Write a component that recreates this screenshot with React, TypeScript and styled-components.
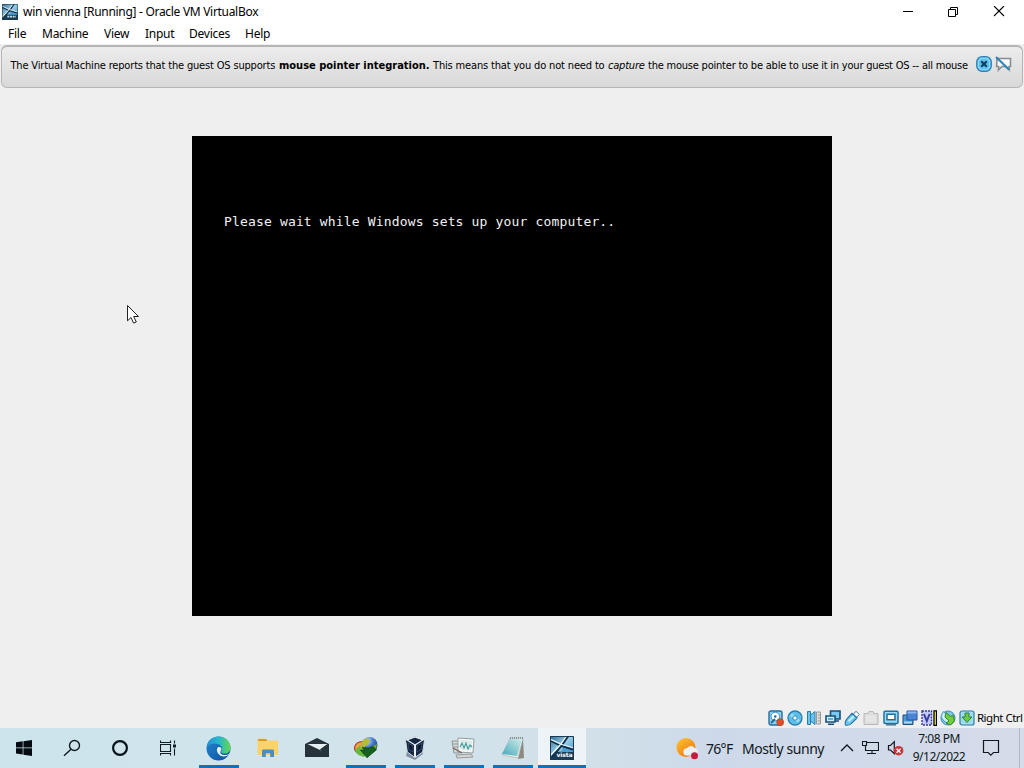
import React, { FC } from 'react'
import styled, { createGlobalStyle } from 'styled-components'

const App: FC = () => {
  return (
    <Desktop>
      <GlobalStyle />
      <TitleBar>
        <VistaIcon size={16} />
        <Title>win vienna [Running] - Oracle VM VirtualBox</Title>
        <WindowControls />
      </TitleBar>
      <MenuBar>
        {menus.map((menu) => (
          <MenuItem key={menu.label} $width={menu.width}>
            {menu.label}
          </MenuItem>
        ))}
      </MenuBar>
      <Notice>
        <NoticeText>
          <Part $width={268.5} $spacing={-0.17}>The Virtual Machine reports that the guest OS supports</Part>
          <Part as="b" $width={154} $spacing={0}>mouse pointer integration.</Part>
          <Part $width={175} $spacing={-0.16}>This means that you do not need to</Part>
          <Part as="i" $width={40} $spacing={-0.2}>capture</Part>
          <Part $width={321} $spacing={-0.215}>the mouse pointer to be able to use it in your guest OS -- all mouse</Part>
        </NoticeText>
        <NoticeIcons />
      </Notice>
      <Workspace>
        <GuestScreen>
          <GuestText>Please wait while Windows sets up your computer..</GuestText>
        </GuestScreen>
        <Pointer width="14" height="22" viewBox="0 0 14 22">
          <path d="M1.5 1.5v15.3l3.5-3.3 2.6 5.6 2.7-1.1-2.6-5.5h4.8z" fill="#fff" stroke="#222" />
        </Pointer>
      </Workspace>
      <StatusBar>
        <StatusIcons />
        <HostKey>Right Ctrl</HostKey>
      </StatusBar>
      <Taskbar>
        <SystemButtons>
          <SystemButton>
            <svg width="16" height="16" viewBox="0 0 16 16">
              <path d="M0 2.2 6.7 1.3V7.5H0zM7.4 1.2 16 0v7.5H7.4zM0 8.2h6.7v6.3L0 13.6zM7.4 8.2H16V16l-8.6-1.3z" fill="#050b10" />
            </svg>
          </SystemButton>
          <SystemButton>
            <svg width="18" height="18" viewBox="0 0 18 18" fill="none" stroke="#111b22" strokeWidth="1.4">
              <circle cx="11.5" cy="6.5" r="5" />
              <path d="m8 10.2-7 6.6" />
            </svg>
          </SystemButton>
          <SystemButton>
            <svg width="18" height="18" viewBox="0 0 18 18">
              <circle cx="9" cy="9" r="6.9" fill="none" stroke="#07131b" strokeWidth="2.2" />
            </svg>
          </SystemButton>
          <SystemButton>
            <svg width="16" height="16" viewBox="0 0 16 16" fill="none" stroke="#111b22" strokeWidth="1.1">
              <path d="M.5.5v2h10v-2M.5 15.5v-2h10v2M.5 4.5h10v7H.5zM14.5.5v3M14.5 8.5v7" />
              <path d="M13 4.5h3v3h-3z" fill="#111b22" stroke="none" />
            </svg>
          </SystemButton>
        </SystemButtons>
        {apps.map((app) => (
          <AppButton key={app.name} $active={app.active}>
            <AppIcon>{app.icon}</AppIcon>
            <RunningMark $running={app.running} $active={app.active} />
          </AppButton>
        ))}
        <Weather>
          <WeatherIcon />
          <Temperature>76°F</Temperature>
          <Sky>Mostly sunny</Sky>
        </Weather>
        <Tray />
        <Clock>
          <ClockLine>7:08 PM</ClockLine>
          <ClockLine>9/12/2022</ClockLine>
        </Clock>
        <ActionCenter>
          <svg width="18" height="18" viewBox="0 0 18 18" fill="none" stroke="#101820" strokeWidth="1.2">
            <path d="M1.5 1.5h15v12h-5L8.8 16.2 6.2 13.5H1.5z" />
          </svg>
        </ActionCenter>
        <ShowDesktop />
      </Taskbar>
    </Desktop>
  )
}

const VistaIcon: FC<{ size: number }> = ({ size }) => (
  <svg width={size} height={size} viewBox="0 0 24 24">
    <defs>
      <linearGradient id={`vista${size}`} x1="0" y1="0" x2="1" y2="1">
        <stop offset="0" stopColor="#2a668f" />
        <stop offset=".45" stopColor="#9bd0ea" />
        <stop offset="1" stopColor="#2e77aa" />
      </linearGradient>
    </defs>
    <path d="M0 0h24v24H0z" fill={`url(#vista${size})`} />
    <path d="M0 21 5 16l19-1v9H0z" fill="#183b56" />
    <path d="m14 9 10 4v3H11z" fill="#4b9fd0" />
    <path d="M0 4.5 11 9.8 24 13.8M18.3 0 11.5 10 2 21" fill="none" stroke="#123049" strokeWidth="2" />
    <path d="M0 3 11 8.3 24 12M16.5 0 10 9 0 20" fill="none" stroke="#eff9fd" strokeWidth="1.2" />
    {size > 16 && (
      <text x="6.5" y="20.5" fill="#fff" fontFamily="DejaVu Sans" fontSize="6" fontWeight="bold" textLength="16">vista</text>
    )}
    {size <= 16 && <path d="M8 19h13" stroke="#c7dce9" strokeWidth="2.5" strokeDasharray="3 1" />}
    <path d="M.5.5h23v23H.5z" fill="none" stroke="#193b55" />
  </svg>
)

const WindowControls: FC = () => (
  <Controls>
    <svg width="12" height="12" viewBox="0 0 12 12" stroke="#000">
      <path d="M1 5.5h10" />
    </svg>
    <svg width="12" height="12" viewBox="0 0 12 12" fill="none" stroke="#000">
      <path d="M.5 3.5h7v7h-7zM2.5 3V1.5h7v7H8" />
    </svg>
    <svg width="12" height="12" viewBox="0 0 12 12" stroke="#000" strokeWidth="1.1">
      <path d="m1 0 10 10M11 0 1 10" />
    </svg>
  </Controls>
)

const NoticeIcons: FC = () => (
  <NoticeActions>
    <svg width="16" height="16" viewBox="0 0 16 16">
      <rect x=".7" y=".7" width="14.6" height="14.6" rx="5.5" fill="#5dc2f5" stroke="#2f7fb5" strokeWidth="1.3" />
      <rect x="2.3" y="2.3" width="11.4" height="11.4" rx="4" fill="none" stroke="#9bdcfb" />
      <path d="m5.2 5.2 5.6 5.6m0-5.6-5.6 5.6" stroke="#0d405f" strokeWidth="2.2" />
    </svg>
    <svg width="17" height="16" viewBox="0 0 17 16">
      <path d="M2 2.5h13.5v8H14l.3 3.5-3.6-3.5H6.8L3.4 14l.2-3.5h-2z" fill="#f8fafb" stroke="#858d91" strokeWidth="1.6" />
      <path d="m1 1 13 12.5" stroke="#2a83b8" strokeWidth="2" />
    </svg>
  </NoticeActions>
)

// Device indicators of the machine, left to right
const StatusIcons: FC = () => (
  <Indicators>
    <Indicator>
      <rect x="1" y="1" width="13" height="14" rx="2" fill="#8fd2ef" stroke="#236e9e" strokeWidth="1.4" />
      <circle cx="7.3" cy="6.5" r="4.3" fill="#fff" stroke="#3b8fc2" />
      <circle cx="7.3" cy="6.5" r="1.2" fill="#1c6596" />
      <path d="m3 13 4-4" stroke="#1c6596" strokeWidth="1.8" />
      <circle cx="12.2" cy="12.2" r="3.5" fill="#e04e27" stroke="#a83f2d" strokeWidth=".6" />
    </Indicator>
    <Indicator>
      <circle cx="8" cy="8" r="7" fill="#5dbfe8" stroke="#277eb0" strokeWidth="1.3" />
      <path d="M4 4.5 8 8l4 3.5" stroke="#9bdcf3" strokeWidth="3" />
      <circle cx="8" cy="8" r="2.2" fill="#fff" stroke="#2382b5" />
    </Indicator>
    <Indicator>
      <path d="M1.5 1.5h3v13h-3zM4.5 5 9 1.5v13L4.5 11z" fill="#69c4ec" stroke="#287eae" />
      <path d="M10.5 2h4v12h-4zM12 5h3M12 8h3M12 11h3" fill="#ddd" stroke="#999" />
    </Indicator>
    <Indicator>
      <path d="M5.5 1h9.5v8H5.5zM9 11h5" fill="#79c9ec" stroke="#174f78" strokeWidth="1.6" />
      <path d="M1 6h9v6H1zM3 14.2h6" fill="#d1effa" stroke="#174f78" strokeWidth="1.6" />
      <path d="M3 8h5v2H3z" fill="#55b1df" />
    </Indicator>
    <Indicator>
      <path d="m9.5 4.2 2.5-3 3.3 3.3-2.8 2.8z" fill="#fff" stroke="#587888" />
      <path d="M8 3.3 13 8l-5.7 5.6c-2 1.6-4.5 1.8-5.8 1.4-.5-1.8 0-4.2 1.3-5.8z" fill="#70c8ee" stroke="#2478a7" strokeWidth="1.2" />
      <path d="m4.5 11.3 5.3-5" stroke="#c4effb" strokeWidth="2" />
    </Indicator>
    <Indicator>
      <path d="M1 3.5h4l1-2h4l1 2h4v11H1z" fill="#ddd" stroke="#b8b8b8" />
      <path d="M3 5.5h10v7H3z" fill="#e5e5e5" />
    </Indicator>
    <Indicator>
      <rect x="1" y="1.2" width="14" height="12.3" rx="1" fill="#9adcf5" stroke="#246f9e" strokeWidth="1.5" />
      <path d="M4 4.3h8v5.4H4z" fill="#fff" stroke="#216e9b" strokeWidth="1.5" />
      <path d="M3 14.8h10" stroke="#557b91" strokeWidth="1.6" />
    </Indicator>
    <Indicator>
      <path d="M1 5h10v9.5H1z" fill="#4b9bd0" stroke="#204c7c" />
      <path d="M5 1h10v9H5z" fill="#4a83d4" stroke="#2754a0" />
      <path d="M5.5 2.5h9" stroke="#8ab8f5" strokeWidth="2" />
      <path d="M2 12.5h8" stroke="#a7d9ef" strokeWidth="2" />
    </Indicator>
    <Indicator>
      <path d="M1 1h9.5v14H1z" fill="#c5c9fa" stroke="#343c91" strokeDasharray="2 1" strokeWidth="1.4" />
      <path d="m3 4 2.8 7 2.8-7" fill="none" stroke="#393e9c" strokeWidth="2" />
      <path d="M13 .8h2.5v14.5H13z" fill="#eef45a" stroke="#000" strokeWidth="1.3" />
    </Indicator>
    <Indicator>
      <circle cx="8" cy="8" r="7" fill="#79c9eb" stroke="#388bb2" />
      <path d="M3 1.5 9 6v8L4 11 1 7z" fill="#cceef8" stroke="#378db5" strokeWidth=".8" />
      <path d="m6 2.5 4.5 4L13 5l1.5 6-4 4L6 13l3-2-4-4z" fill="#70cf3b" stroke="#39822b" />
    </Indicator>
    <Indicator>
      <rect x="1" y="1" width="14" height="14" rx="2" fill="#a0dced" stroke="#2c7eaa" strokeWidth="1.2" />
      <path d="M6 3h4v4h3l-5 5.5L3 7h3z" fill="#69cb45" stroke="#2d8244" />
    </Indicator>
  </Indicators>
)

const WeatherIcon: FC = () => (
  <svg width="24" height="24" viewBox="0 0 24 24">
    <defs>
      <linearGradient id="sun" x1="0" y1="0" x2=".7" y2="1">
        <stop offset="0" stopColor="#ffc52c" />
        <stop offset="1" stopColor="#ed7915" />
      </linearGradient>
    </defs>
    <circle cx="10" cy="11.5" r="9.5" fill="url(#sun)" />
    <path d="M11 19.5a3.6 3.6 0 0 1 0-7.2 4.4 4.4 0 0 1 7.4-.3c4.4.4 4.7 7.5-.3 7.5z" fill="#eaf0fa" />
    <circle cx="18.5" cy="19.7" r="3.5" fill="#c51d3c" />
  </svg>
)

const Tray: FC = () => (
  <TrayIcons>
    <svg width="14" height="10" viewBox="0 0 14 10" fill="none" stroke="#101820" strokeWidth="1.4">
      <path d="m1 8 6-6 6 6" />
    </svg>
    <svg width="17" height="16" viewBox="0 0 17 16" fill="none" stroke="#101820" strokeWidth="1.1">
      <path d="M5 2.5h11.5v8H3.5V6M10 10.5v3M5 13.5h9M.5 1.5h4v4h-4z" />
    </svg>
    <svg width="18" height="16" viewBox="0 0 18 16">
      <path d="M1.5 5.5h2l3.8-3.8v12L3.5 10h-2z" fill="none" stroke="#101820" strokeWidth="1.2" />
      <circle cx="11.6" cy="10.7" r="4.8" fill="#cc3438" />
      <path d="m9.6 8.7 4 4m0-4-4 4" stroke="#fff" strokeWidth="1.3" />
    </svg>
  </TrayIcons>
)

const menus = [
  { label: 'File', width: 34 },
  { label: 'Machine', width: 62 },
  { label: 'View', width: 41 },
  { label: 'Input', width: 44 },
  { label: 'Devices', width: 56 },
  { label: 'Help', width: 40 },
]

const apps = [
  {
    name: 'Edge',
    running: true,
    icon: (
      <svg width="25" height="25" viewBox="0 0 24 24">
        <defs>
          <linearGradient id="edgeTop" x1="0" x2="1">
            <stop offset="0" stopColor="#238fd3" />
            <stop offset=".5" stopColor="#25b8ce" />
            <stop offset="1" stopColor="#67d54b" />
          </linearGradient>
          <linearGradient id="edgeBottom" x1="0" y1="0" x2="1" y2="1">
            <stop offset="0" stopColor="#2487d4" />
            <stop offset="1" stopColor="#0d509b" />
          </linearGradient>
        </defs>
        <circle cx="12" cy="12" r="11.5" fill="url(#edgeBottom)" />
        <path d="M.6 11C1.5 3.5 7.3.4 12.4.5c6.3.1 11.2 5.3 11.1 10.7 0 4.1-3.4 6.2-6.8 5.5-3-.6-2.3-1.7-1.5-3.3C16.7 9.8 12.4 7 8.4 7.1 4.4 7.2 1.5 9.2.6 11z" fill="url(#edgeTop)" />
        <path d="M11.8 10.6c3-.2 3.7 1.9 2.5 3.4-1.7 2.8.8 4.8 5 4.2 1.3-.2 2-.6 3.5-1.4-2.6 3.5-8 3.9-10.4.8-2.1-2.2-2.7-5.3-.6-7z" fill="#e3f1f7" />
        <path d="M22.8 16.8h1.2V20h-3z" fill="#d2e4eb" />
      </svg>
    ),
  },
  {
    name: 'Explorer',
    icon: (
      <svg width="24" height="24" viewBox="0 0 24 24">
        <path d="M1.5 4c0-1 .5-1.5 1.4-1.5h6l2 2h9.6c1 0 1.5.5 1.5 1.5v13H1.5z" fill="#fdd269" />
        <path d="M2 3h8l1.5 2H2z" fill="#d99c28" />
        <path d="M6 21v-6.5l1-1h10l1 1V21h-3.8v-3.8H9.8V21z" fill="#4c8db9" />
      </svg>
    ),
  },
  {
    name: 'Mail',
    icon: (
      <svg width="26" height="22" viewBox="0 0 26 22">
        <path d="M1 7 13 1l12 6v13H1z" fill="#27333b" />
        <path d="M3.5 7h20l-7.2 5.5L18 14z" fill="#e4eef3" />
        <path d="m15.7 12.8 7.5-5.6-3.2 7.6z" fill="#27333b" />
      </svg>
    ),
  },
  {
    name: 'Download Manager',
    running: true,
    icon: (
      <svg width="26" height="26" viewBox="0 0 26 26">
        <defs>
          <radialGradient id="globe" cx=".35" cy=".25" r=".8">
            <stop offset="0" stopColor="#c7e8ff" />
            <stop offset=".45" stopColor="#4f7fd0" />
            <stop offset="1" stopColor="#123c76" />
          </radialGradient>
        </defs>
        <ellipse cx="9.5" cy="13" rx="8" ry="6.5" fill="#eda23b" stroke="#ae392a" strokeWidth="1.2" />
        <path d="M2 15c3-2 4-5 9-5l5 6-5 6c-4-1-8-3-9-7z" fill="#68b741" />
        <circle cx="16.5" cy="10" r="8" fill="url(#globe)" />
        <path d="m10 5 4-2 3 2-2 5-3 1-1 4-4-2z" fill="#b5bd37" />
        <path d="m18 12 6-3-1 5-4 4z" fill="#79a63a" />
        <path d="M9 12c4 1.5 7 1.5 10.5-.8l4 3.5L14 22.8 7.5 15l4 .5z" fill="#15611d" stroke="#0a3f11" strokeWidth=".7" />
      </svg>
    ),
  },
  {
    name: 'VirtualBox',
    running: true,
    icon: (
      <svg width="24" height="26" viewBox="0 0 24 26">
        <path d="m4 16-1 5 9 4 8-6-1-3z" fill="#8390a4" />
        <path d="m2.5 5 9.5-4 9.5 4-1.8 12L12 22.5 4.3 17z" fill="#142743" stroke="#d5dce6" />
        <path d="m4 5 8-3 8 3-8 5z" fill="#142743" stroke="#edf2f7" strokeWidth="1.2" />
        <path d="M12 10v12" stroke="#eaf0f5" strokeWidth="2" />
        <path d="m5 8 5 3v6l-4-3zM14 11l5-3-1 6-4 3z" fill="#071832" stroke="#52657e" strokeWidth=".6" />
      </svg>
    ),
  },
  {
    name: 'System Monitor',
    running: true,
    icon: (
      <svg width="25" height="22" viewBox="0 0 25 22">
        <path d="M1 4h8v12H3z" fill="#d4d8d9" stroke="#8d9798" />
        <path d="M2 7h6M2 10h6" stroke="#999" />
        <path d="m7 1 16 1-1 14-15-1z" fill="#f1f5f5" stroke="#989d9d" />
        <path d="m9 3 12 1-1 9-11-1z" fill="#dce9e9" />
        <path d="m9 10 2-4 2 5 2-5 2 6 2-4 2 2" fill="none" stroke="#439d9e" strokeWidth="1.1" />
        <path d="m5 18 15-1 2 3-16 1z" fill="#d6d6d6" stroke="#999" />
        <path d="m2 11 9 5" stroke="#765f55" strokeWidth="1.2" />
      </svg>
    ),
  },
  {
    name: 'Notepad',
    running: true,
    icon: (
      <svg width="26" height="24" viewBox="0 0 26 24">
        <defs>
          <linearGradient id="note" x1="1" y1="0" x2="0" y2="1">
            <stop offset="0" stopColor="#d4eceb" />
            <stop offset="1" stopColor="#3ea8b8" />
          </linearGradient>
        </defs>
        <path d="m23 2 1 20-6 1z" fill="#8c8b82" />
        <path d="M10 2h13l-5 20-16-3z" fill="#e9eded" stroke="#a2a9a8" strokeWidth=".6" />
        <path d="M10 3h12l-5 17-15-2z" fill="url(#note)" />
        <path d="M10 2h13" stroke="#777f80" strokeDasharray="1 1" strokeWidth="1.6" />
      </svg>
    ),
  },
  { name: 'Virtual Machine', running: true, active: true, icon: <VistaIcon size={24} /> },
]

export default App

const GlobalStyle = createGlobalStyle`
  body {
    margin: 0;
    overflow: hidden;
  }
  svg {
    display: block;
    flex: none;
  }
`

const Desktop = styled.div`
  display: flex;
  flex-direction: column;
  width: 1024px;
  height: 768px;
  background: #efefef;
  color: #000;
  font-family: 'Noto Sans', 'Open Sans', sans-serif;
  font-size: 12px;
  white-space: nowrap;
`

const TitleBar = styled.header`
  display: flex;
  align-items: center;
  height: 24px;
  padding-left: 2px;
  box-sizing: border-box;
  background: #fff;
`

const Title = styled.div`
  margin-left: 5px;
  line-height: 24px;
  letter-spacing: -0.3px;
`

const Controls = styled.div`
  display: flex;
  gap: 33.5px;
  margin: -1px 19px 0 auto;
`

const MenuBar = styled.nav`
  display: flex;
  height: 20px;
  padding-left: 8px;
  background: #fff;
  line-height: 20px;
`

const MenuItem = styled.div<{ $width: number }>`
  width: ${({ $width }) => $width}px;
  letter-spacing: -0.25px;
`

const Notice = styled.section`
  display: flex;
  height: 43px;
  margin: 1px 1px 0;
  padding: 0 10px 0 8.5px;
  box-sizing: border-box;
  border: 1px solid #b5b5b5;
  border-top-width: 2px;
  border-radius: 6px;
  background: linear-gradient(#ececec, #d9d9d9);
`

const NoticeText = styled.p`
  display: flex;
  margin: 0;
  font-family: 'DejaVu Sans Condensed', 'DejaVu Sans', sans-serif;
  font-stretch: condensed;
  font-size: 11px;
  line-height: 37px;
`

const Part = styled.span<{ $width: number; $spacing: number }>`
  width: ${({ $width }) => $width}px;
  letter-spacing: ${({ $spacing }) => $spacing}px;
`

const NoticeActions = styled.div`
  display: flex;
  gap: 3px;
  margin: 9px 0 0 auto;
`

const Workspace = styled.main`
  position: relative;
  display: flex;
  justify-content: center;
  flex: 1;
  padding-top: 48px;
`

const GuestScreen = styled.div`
  width: 640px;
  height: 480px;
  padding: 78px 32px 0;
  box-sizing: border-box;
  background: #000;
`

const GuestText = styled.div`
  color: #f2f2f2;
  font-family: 'DejaVu Sans Mono', monospace;
  font-size: 13px;
  line-height: 16px;
  letter-spacing: 0.16px;
`

const Pointer = styled.svg`
  position: absolute;
  top: 216px;
  left: 126px;
`

const StatusBar = styled.footer`
  display: flex;
  align-items: center;
  height: 20px;
  padding-left: 768px;
`

const Indicators = styled.div`
  display: flex;
  gap: 3.1px;
`

const Indicator = styled.svg.attrs({ width: 16, height: 16, viewBox: '0 0 16 16', fill: 'none' })``

const HostKey = styled.div`
  margin: -2px 0 0 2px;
  font-size: 11.5px;
  letter-spacing: -0.5px;
`

const Taskbar = styled.div`
  display: flex;
  height: 40px;
  background: linear-gradient(90deg, #cce4ec 0, #d2e4eb 30%, #d2e0e9 58%, #cdd9ea 70%, #d5dbe9 100%);
  color: #101820;
`

const SystemButtons = styled.div`
  display: flex;
  width: 194px;
`

const SystemButton = styled.div`
  display: flex;
  align-items: center;
  justify-content: center;
  width: 48px;
`

const AppButton = styled.div<{ $active?: boolean }>`
  display: flex;
  flex-direction: column;
  align-items: center;
  flex: none;
  width: ${({ $active }) => ($active ? 48 : 49)}px;
  margin-left: ${({ $active }) => ($active ? 1 : 0)}px;
  background: ${({ $active }) => ($active ? '#edf3f7' : 'transparent')};
`

const AppIcon = styled.div`
  display: flex;
  align-items: center;
  flex: 1;
  padding-top: 3px;
`

const RunningMark = styled.div<{ $running?: boolean; $active?: boolean }>`
  width: ${({ $active }) => ($active ? 48 : 40)}px;
  height: 3px;
  background: ${({ $running }) => ($running ? '#0873c4' : 'transparent')};
`

const Weather = styled.div`
  display: flex;
  align-items: center;
  width: 254px;
  padding-left: 90px;
  box-sizing: border-box;
  font-size: 14px;
`

const Temperature = styled.span`
  width: 36px;
  margin-left: 6px;
  letter-spacing: -0.7px;
`

const Sky = styled.span`
  letter-spacing: -0.42px;
`

const TrayIcons = styled.div`
  display: flex;
  align-items: center;
  gap: 8px;
  width: 64px;
`

const Clock = styled.div`
  display: flex;
  flex-direction: column;
  align-items: center;
  width: 70px;
  padding-top: 2px;
  line-height: 18px;
`

const ClockLine = styled.span`
  letter-spacing: -0.5px;
`

const ActionCenter = styled.div`
  display: flex;
  align-items: center;
  margin-left: 8px;
`

const ShowDesktop = styled.div`
  width: 4px;
  margin-left: auto;
  border-left: 1px solid #aeb9c7;
`
